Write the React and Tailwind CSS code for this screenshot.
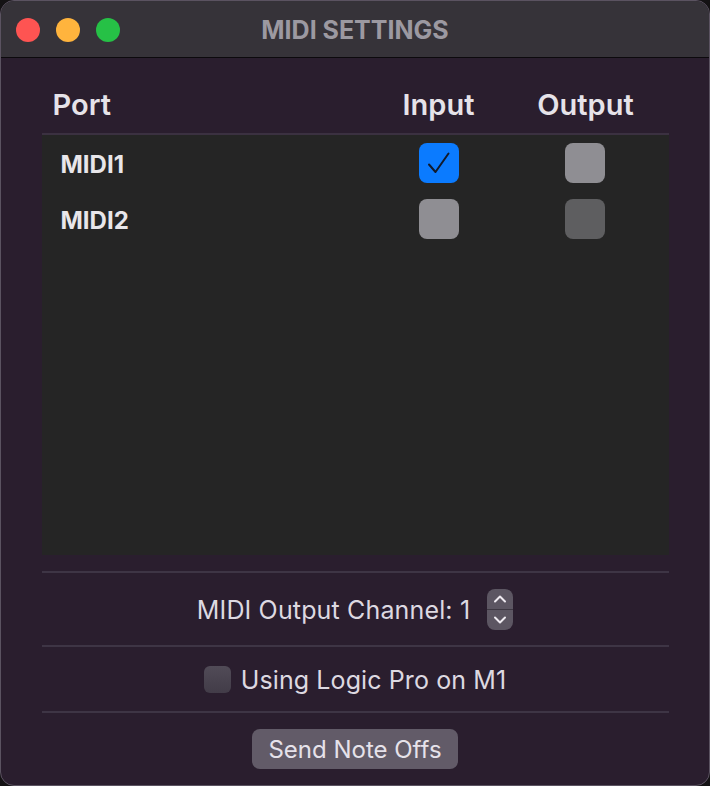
import React from "react";

function Check({ state }) {
  if (state === "on") {
    return (
      <div className="w-[40px] h-[40px] rounded-[8px] bg-[#0b7bff] flex items-center justify-center">
        <svg width="30" height="30" viewBox="0 0 30 30" fill="none">
          <path d="M5 16.5 L11.5 24 L24.5 5.5" stroke="#111a2c" strokeWidth="2" strokeLinecap="round" strokeLinejoin="round" />
        </svg>
      </div>
    );
  }
  if (state === "off") {
    return <div className="w-[40px] h-[40px] rounded-[8px] bg-[#8f8e93]" />;
  }
  return <div className="w-[40px] h-[40px] rounded-[8px] bg-[#5e5e60]" />;
}

const rows = [
  { name: "MIDI1", input: "on", output: "off" },
  { name: "MIDI2", input: "off", output: "dim" },
];

export default function App() {
  return (
    <div
      className="w-[710px] h-[786px] bg-[#141214] overflow-hidden"
      style={{ fontFamily: "Inter, 'Noto Sans', 'Liberation Sans', sans-serif" }}
    >
      <div className="w-[710px] h-[786px] rounded-[14px] border-[1.5px] border-[#5b5361] overflow-hidden flex flex-col bg-[#2a1e2e]">
        <div className="relative h-[57px] shrink-0 bg-[#363339] border-b-[1.5px] border-[#0c0a0d] flex items-center justify-center">
          <div className="absolute left-[15px] top-[17px] flex gap-[16px]">
            <div className="w-[24px] h-[24px] rounded-full bg-[#fe5452]" />
            <div className="w-[24px] h-[24px] rounded-full bg-[#ffb43d]" />
            <div className="w-[24px] h-[24px] rounded-full bg-[#26c146]" />
          </div>
          <div className="text-[25px] font-bold text-[#9c99a1] leading-none pt-[2px]">MIDI SETTINGS</div>
        </div>

        <div className="flex flex-col px-[40.5px]">
          <div className="grid grid-cols-[1fr_146px_146px] pr-[11px] h-[77px] items-end pb-[12px] border-b-2 border-[#3b3141]">
            <div className="pl-[11px] text-[29px] font-semibold text-[#e6e3e9] leading-none pb-[2px]">Port</div>
            <div className="text-center text-[29px] font-semibold text-[#e6e3e9] leading-none pb-[2px]">Input</div>
            <div className="text-center text-[29px] font-semibold text-[#e6e3e9] leading-none pb-[2px] pl-[2px]">Output</div>
          </div>
          <div className="h-[420px] bg-[#252525]">
            {rows.map((r) => (
              <div key={r.name} className="grid grid-cols-[1fr_146px_146px] pr-[11px] h-[56px] items-center">
                <div className="pl-[19px] pt-[3px] text-[24px] font-bold text-[#e8e6ea] leading-none">{r.name}</div>
                <div className="flex justify-center">
                  <Check state={r.input} />
                </div>
                <div className="flex justify-center">
                  <Check state={r.output} />
                </div>
              </div>
            ))}
          </div>

          <div className="mt-[16px] border-t-2 border-[#3e3545] h-[74px] flex items-center justify-center gap-[17px]">
            <span className="text-[25px] text-[#ddd9e1] leading-none pt-[3px] tracking-[0.15px]">MIDI Output Channel: 1</span>
            <div className="w-[26px] h-[41px] rounded-[8px] bg-[#5c5662] flex flex-col overflow-hidden">
              <div className="flex-1 flex items-center justify-center border-b border-[#3d3842]">
                <svg width="14" height="10" viewBox="0 0 14 10" fill="none">
                  <path d="M2 7.5 L7 2.5 L12 7.5" stroke="#eeeaf0" strokeWidth="2" strokeLinecap="round" strokeLinejoin="round" />
                </svg>
              </div>
              <div className="flex-1 flex items-center justify-center">
                <svg width="14" height="10" viewBox="0 0 14 10" fill="none">
                  <path d="M2 2.5 L7 7.5 L12 2.5" stroke="#eeeaf0" strokeWidth="2" strokeLinecap="round" strokeLinejoin="round" />
                </svg>
              </div>
            </div>
          </div>

          <div className="border-t-2 border-[#3e3545] h-[66px] flex items-center justify-center gap-[10px]">
            <div className="w-[27px] h-[27px] rounded-[6px] bg-gradient-to-b from-[#514b57] to-[#423c48]" />
            <span className="text-[25px] text-[#ddd9e1] leading-none pt-[3px] tracking-[0.1px]">Using Logic Pro on M1</span>
          </div>

          <div className="border-t-2 border-[#3e3545] pt-[16px] flex justify-center">
            <div className="w-[206px] h-[40px] rounded-[8px] bg-[#625b68] flex items-center justify-center text-[24px] text-[#e6e2ea] leading-none pt-[2px]">
              Send Note Offs
            </div>
          </div>
        </div>
      </div>
    </div>
  );
}
